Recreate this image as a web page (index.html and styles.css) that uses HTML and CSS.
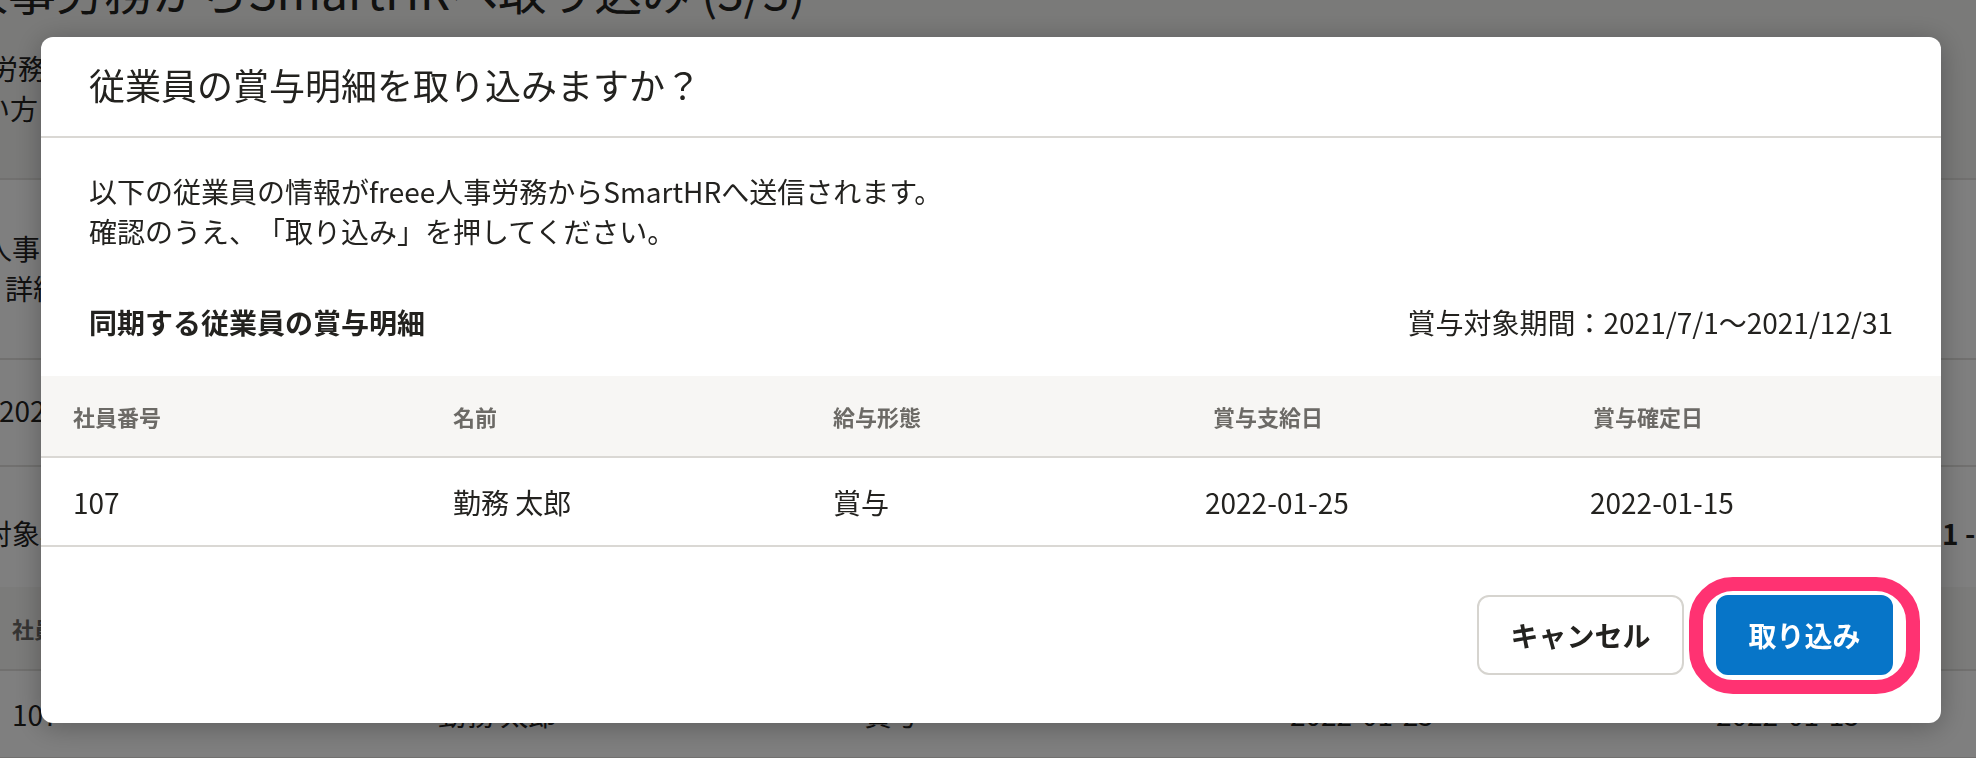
FILE: index.html
```html
<!DOCTYPE html>
<html lang="ja">
<head>
<meta charset="utf-8">
<title>従業員の賞与明細を取り込みますか？</title>
<link rel="stylesheet" href="styles.css">
</head>
<body>
<div class="page">
  <div class="page-top">
    <h1 class="page-title">人事労務からSmartHRへ取り込み (3/3)</h1>
    <div class="page-intro">
      <p class="page-line shift-a">労務から取り込む従業員の賞与明細を確認してください。</p>
      <p class="page-line shift-b">い方については、ヘルプページをご覧ください。</p>
    </div>
  </div>
  <section class="page-block block-info">
    <p class="page-line shift-c">人事労務の賞与明細データを取り込みます。</p>
    <p class="page-line shift-d">詳細はヘルプページをご覧ください。</p>
  </section>
  <section class="page-block block-period">
    <p class="page-line shift-e">2021/7/1〜2021/12/31</p>
  </section>
  <section class="page-block block-meta">
    <p class="page-line shift-c">対象期間の従業員</p>
    <p class="page-line page-count">1 - 1件 / 全1件</p>
  </section>
  <div class="page-table-head">
    <span>社員番号</span><span>名前</span><span>給与形態</span><span>賞与支給日</span><span>賞与確定日</span>
  </div>
  <div class="page-table-row">
    <span>107</span><span>勤務 太郎</span><span>賞与</span><span>2022-01-25</span><span>2022-01-15</span>
  </div>
</div>

<div class="overlay">
  <div class="dialog" role="dialog" aria-labelledby="dialog-title">
    <header class="dialog-header">
      <h2 id="dialog-title" class="dialog-title">従業員の賞与明細を取り込みますか？</h2>
    </header>
    <div class="dialog-body">
      <p class="dialog-text">以下の従業員の情報がfreee人事労務からSmartHRへ送信されます。<br>確認のうえ、「取り込み」を押してください。</p>
      <div class="section-head">
        <h3 class="section-title">同期する従業員の賞与明細</h3>
        <p class="section-period">賞与対象期間：2021/7/1〜2021/12/31</p>
      </div>
    </div>
    <div class="table">
      <div class="thead">
        <span>社員番号</span><span>名前</span><span>給与形態</span><span>賞与支給日</span><span>賞与確定日</span>
      </div>
      <div class="trow">
        <span>107</span><span>勤務 太郎</span><span>賞与</span><span>2022-01-25</span><span>2022-01-15</span>
      </div>
    </div>
    <footer class="dialog-footer">
      <button class="btn btn-secondary" type="button">キャンセル</button>
      <button class="btn btn-primary" type="button">取り込み</button>
    </footer>
  </div>
</div>
</body>
</html>
```

FILE: styles.css
```css
* {
  box-sizing: border-box;
}

html,
body {
  margin: 0;
  padding: 0;
}

body {
  width: 1976px;
  height: 758px;
  overflow: hidden;
  background: #ffffff;
  color: #23221f;
  font-family: "Noto Sans CJK JP", "Noto Sans", sans-serif;
  font-size: 28px;
  line-height: 40px;
  text-spacing-trim: space-all;
}

p,
h1,
h2,
h3 {
  margin: 0;
}

/* ---------- background page ---------- */

.page {
  width: 2130px;
  margin: -39px 0 0 -18px;
}

.page-top {
  background: #f4f4f3;
  padding-bottom: 50px;
  border-bottom: 2px solid #e2e1de;
}

.page-title {
  margin-left: -22px;
  font-size: 48px;
  line-height: 56px;
  font-weight: 400;
  white-space: nowrap;
}

.page-intro {
  margin-top: 31px;
}

.page-line {
  white-space: nowrap;
}

.shift-a { padding-left: 8px; }
.shift-b { padding-left: 0; }
.shift-c { padding-left: 2px; }
.shift-d { padding-left: 23px; }
.shift-e { padding-left: 17px; }

.page-block {
  border-bottom: 2px solid #e2e1de;
}

.block-info {
  padding: 48px 0 50px;
}

.block-period {
  padding: 30px 0 35px;
}

.block-meta {
  display: grid;
  grid-template-columns: 1960px auto;
  padding: 46px 0 34px;
  border-bottom: none;
}

.page-count {
  font-weight: 700;
}

.page-table-head,
.page-table-row {
  display: grid;
  grid-template-columns: repeat(5, 426px);
  align-items: center;
  border-bottom: 2px solid #e2e1de;
}

.page-table-head span,
.page-table-row span {
  padding-left: 30px;
  white-space: nowrap;
}

.page-table-head {
  height: 84px;
  background: #f7f6f4;
  color: #6c6a66;
  font-size: 22px;
  font-weight: 700;
}

.page-table-row {
  height: 88px;
}

/* ---------- overlay & dialog ---------- */

.overlay {
  position: fixed;
  inset: 0;
  background: rgba(0, 0, 0, 0.5);
  padding: 37px 0 0 41px;
}

.dialog {
  width: 1900px;
  background: #ffffff;
  border-radius: 12px;
  box-shadow: 0 4px 28px rgba(0, 0, 0, 0.28);
  overflow: hidden;
}

.dialog-header {
  padding: 22px 48px 27px;
  border-bottom: 2px solid #dad8d4;
}

.dialog-title {
  font-size: 36px;
  line-height: 50px;
  font-weight: 400;
}

.dialog-body {
  padding: 33px 48px 0;
}

.dialog-text {
  font-size: 28px;
  line-height: 40px;
}

.section-head {
  display: flex;
  justify-content: space-between;
  align-items: center;
  margin: 51px 0 34px;
  height: 40px;
}

.section-title {
  font-size: 28px;
  line-height: 40px;
  font-weight: 700;
}

.section-period {
  font-size: 28px;
  line-height: 40px;
}

.thead,
.trow {
  display: grid;
  align-items: center;
  border-bottom: 2px solid #dad8d4;
}

.thead span,
.trow span {
  padding-left: 32px;
  white-space: nowrap;
}

.thead {
  grid-template-columns: repeat(5, 380px);
  height: 82px;
  background: #f7f6f4;
  color: #6c6a66;
  font-size: 22px;
  font-weight: 700;
}

.trow {
  grid-template-columns: 380px 380px 372px 385px 383px;
  height: 89px;
  font-size: 28px;
}

.dialog-footer {
  display: flex;
  justify-content: flex-end;
  gap: 32px;
  padding: 48px;
}

.btn {
  height: 80px;
  border-radius: 12px;
  border: 2px solid transparent;
  font-family: inherit;
  font-size: 28px;
  font-weight: 700;
  line-height: 40px;
  cursor: pointer;
}

.btn-secondary {
  padding: 0 31.5px;
  background: #ffffff;
  border-color: #d6d4cf;
  color: #23221f;
}

.btn-primary {
  position: relative;
  padding: 0 30.5px;
  background: #0775c8;
  border-color: #0775c8;
  color: #ffffff;
}

/* annotation ring around the primary button */
.btn-primary::after {
  content: "";
  position: absolute;
  left: -29px;
  right: -29px;
  top: -20px;
  bottom: -21px;
  border: 14px solid #ff3272;
  border-radius: 44px;
  pointer-events: none;
}
```
